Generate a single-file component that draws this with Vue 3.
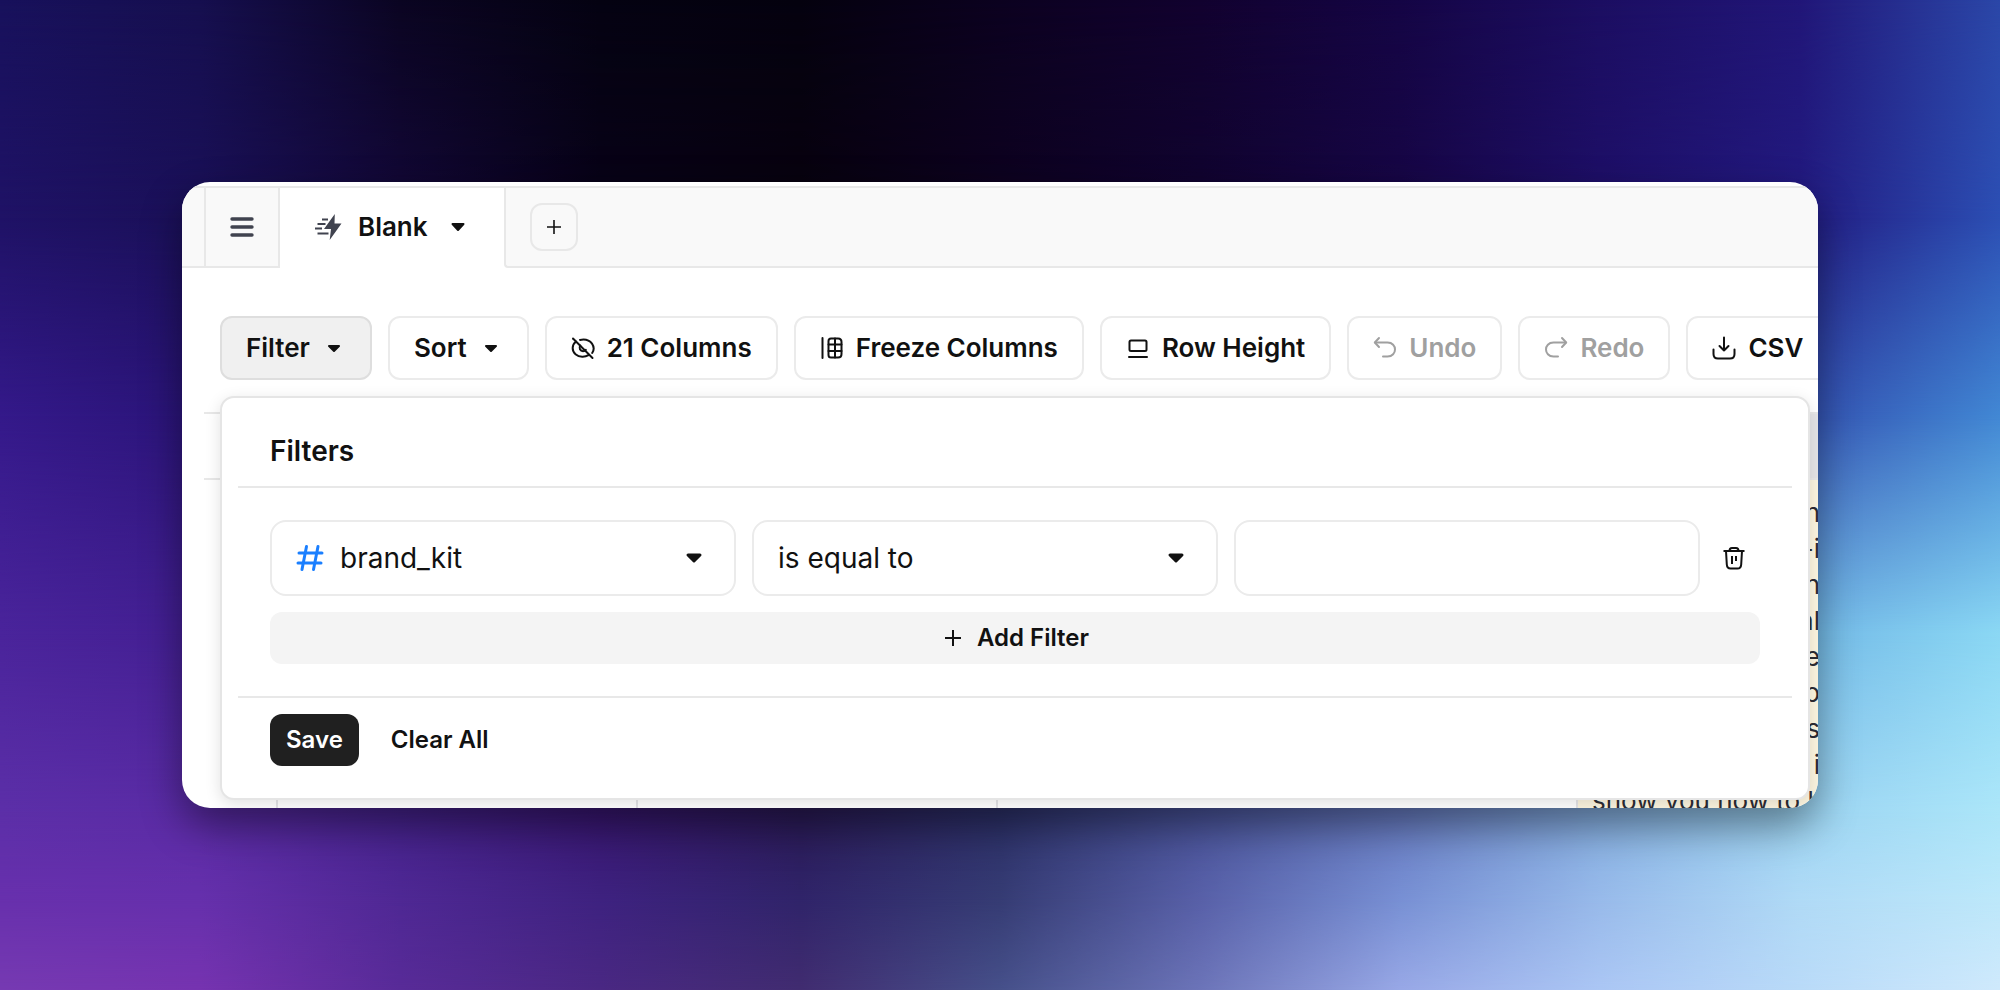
<template>
  <main class="page">
    <div class="backdrop" aria-hidden="true">
      <div
        v-for="(band, index) in bands"
        :key="index"
        class="backdrop__band"
        :style="bandStyle(index)"
      ></div>
    </div>

    <section class="window">
      <nav class="tabs">
        <span class="tabs__edge"></span>
        <button class="tabs__menu" type="button" aria-label="Menu">
          <svg width="28" height="28" viewBox="0 0 28 28">
            <path d="M4 6h20M4 14h20M4 22h20" stroke="#40434f" stroke-width="3.400" stroke-linecap="round" />
          </svg>
        </button>
        <button class="tabs__tab" type="button">
          <svg width="28" height="28" viewBox="0 0 28 28">
            <path d="M20.800 1L10 16h7l-1.300 11L27.500 10.500h-7z" fill="#40434f" />
            <path
              d="M8 6.500h6M3.500 11h8M1 15.500h7M3.500 20.500h11"
              stroke="#40434f"
              stroke-width="2"
            />
          </svg>
          <span>Blank</span>
          <svg class="tabs__caret" width="16" height="16" viewBox="0 0 16 16">
            <path d="M2.500 5h11L8 11z" fill="#111" stroke="#111" stroke-width="2" stroke-linejoin="round" />
          </svg>
        </button>
        <div class="tabs__rest">
          <button class="tabs__add" type="button" aria-label="Add tab">
            <svg width="20" height="20" viewBox="0 0 20 20">
              <path d="M10 3v14M3 10h14" stroke="#111" stroke-width="1.600" />
            </svg>
          </button>
        </div>
      </nav>

      <div class="toolbar">
        <button
          v-for="tool in tools"
          :key="tool.label"
          type="button"
          class="tool"
          :class="{ 'tool--active': tool.menu === 'filters' && showFilters }"
          :disabled="tool.disabled"
          @click="openMenu(tool)"
        >
          <svg v-if="tool.icon" width="24" height="24" viewBox="0 0 24 24" class="tool__icon">
            <path v-for="d in icons[tool.icon]" :key="d" :d="d" />
          </svg>
          <span>{{ tool.label }}</span>
          <svg v-if="tool.menu" width="24" height="24" viewBox="0 0 24 24">
            <path d="M7 10h10l-5 5z" fill="#111" stroke="#111" stroke-width="2" stroke-linejoin="round" />
          </svg>
        </button>

        <form v-if="showFilters" class="popover" @submit.prevent="showFilters = false">
          <h2 class="popover__title">Filters</h2>
          <div class="popover__body">
            <div v-for="(filter, index) in filters" :key="index" class="filter">
              <div class="filter__fields">
                <div class="field">
                  <svg width="28" height="28" viewBox="0 0 28 28">
                    <path
                      d="M10.500 2.500L6 25.500M22 2.500l-4.500 23M3 9h23M2 19h23"
                      fill="none"
                      stroke="#1a7fff"
                      stroke-width="3"
                      stroke-linecap="round"
                    />
                  </svg>
                  <select v-model="filter.column" aria-label="Column">
                    <option>brand_kit</option>
                  </select>
                  <svg class="field__caret" width="32" height="32" viewBox="0 0 32 32">
                    <path d="M10 13h12l-6 6z" fill="#111" stroke="#111" stroke-width="3" stroke-linejoin="round" />
                  </svg>
                </div>
                <div class="field">
                  <select v-model="filter.operator" aria-label="Operator">
                    <option>is equal to</option>
                  </select>
                  <svg class="field__caret" width="32" height="32" viewBox="0 0 32 32">
                    <path d="M10 13h12l-6 6z" fill="#111" stroke="#111" stroke-width="3" stroke-linejoin="round" />
                  </svg>
                </div>
                <div class="field">
                  <input v-model="filter.value" type="text" aria-label="Value" />
                </div>
              </div>
              <button class="filter__remove" type="button" aria-label="Remove filter" @click="removeFilter(index)">
                <svg width="24" height="24" viewBox="0 0 24 24">
                  <path
                    d="M1.500 5h21M7.500 5c0-2 1-3 2.500-3h4c1.500 0 2.500 1 2.500 3M4 5l.8 13.500c.2 3 1.400 4 3.700 4h7c2.300 0 3.500-1 3.700-4L20 5M10 10v8M14 10v5"
                    fill="none"
                    stroke="#111"
                    stroke-width="2"
                  />
                </svg>
              </button>
            </div>
            <button class="button button--wide" type="button" @click="addFilter">
              <svg width="24" height="24" viewBox="0 0 24 24">
                <path d="M12 4v16M4 12h16" stroke="#111" stroke-width="2" />
              </svg>
              <span>Add Filter</span>
            </button>
          </div>
          <div class="popover__footer">
            <button class="button button--dark" type="submit"><span>Save</span></button>
            <button class="button" type="button" @click="filters = []"><span>Clear All</span></button>
          </div>
        </form>
      </div>

      <div class="sheet">
        <table>
          <thead>
            <tr>
              <th class="col-index"></th>
              <th class="col-text"></th>
              <th class="col-text"></th>
              <th class="col-wide"></th>
              <th class="col-last"></th>
            </tr>
          </thead>
          <tbody>
            <tr>
              <td></td>
              <td></td>
              <td></td>
              <td></td>
              <td class="note">
                <p v-for="(line, index) in noteLines" :key="index" class="note__line">{{ line }}</p>
                <p>show you how to b</p>
              </td>
            </tr>
          </tbody>
        </table>
      </div>
    </section>
  </main>
</template>

<script setup>
import { ref } from "vue";

const showFilters = ref(true);
const filters = ref([{ column: "brand_kit", operator: "is equal to", value: "" }]);

const tools = [
  { label: "Filter", menu: "filters" },
  { label: "Sort", menu: "sort" },
  { label: "21 Columns", icon: "hidden" },
  { label: "Freeze Columns", icon: "freeze" },
  { label: "Row Height", icon: "height" },
  { label: "Undo", icon: "undo", disabled: true },
  { label: "Redo", icon: "redo", disabled: true },
  { label: "CSV", icon: "download" },
];

const icons = {
  hidden: [
    "M2 2.500l19.500 19.500",
    "M5 5.500C0.500 9 0.800 15 4.500 18.200c4 3.400 9.500 3.200 13 1",
    "M9 3.900c5-1 9.500.3 12 3.800 2.200 3.200 1.900 6.800.2 9.300",
    "M9.300 9.500c-1.800 2.500 0 5.700 2.700 5.700 1.200 0 2.200-.5 2.800-1.300",
  ],
  freeze: [
    "M2.500 2v20",
    "M11 2.500h7q3.500 0 3.500 3.500v12q0 3.500-3.500 3.500h-7q-2.500 0-2.500-2.500V5q0-2.500 2.500-2.500z",
    "M15 2.500v19",
    "M8.500 8.500h13M8.500 15h13",
  ],
  height: ["M3 21h18", "M5 4.500h14q1.500 0 1.500 1.500v7.500q0 1.500-1.500 1.500H5q-1.500 0-1.500-1.500V6q0-1.500 1.500-1.500z"],
  undo: ["M6 2L1.800 6.500 6 11", "M2.300 6.500h12.200c10 0 10 14 0 14H10"],
  redo: ["M18 2L22.200 6.500 18 11", "M21.700 6.500H9.500c-10 0-10 14 0 14H14"],
  download: ["M12 1.500v13M7.500 10l4.500 4.500 4.500-4.500", "M1.500 13.500v4.500q0 4.500 4.500 4.500h12q4.500 0 4.500-4.500v-4.500"],
};

const noteLines = ["n", "-i", "n", "al", "e", "p", "s", "i"];

// each band is a horizontal gradient that fades into the next one down the page
const bands = [
  { top: 0, colors: ["#18115c", "#160f4f", "#0b0522", "#050312", "#05020f", "#0c0220", "#12022f", "#150545", "#1c0e62", "#211678", "#2b47a8"] },
  { top: 22, colors: ["#1f1266", "#1a1058", "#130838", "#080218", "#08020f", "#0d021f", "#10042f", "#170645", "#1e0f68", "#221a80", "#2c4fb4"] },
  { top: 42, colors: ["#34198a", "#2a1478", "#1c0c48", "#10052c", "#0c0420", "#100828", "#181040", "#202060", "#283c90", "#3350b0", "#4288d4"] },
  { top: 64, colors: ["#4a249b", "#431f92", "#34187a", "#260f58", "#1c0c40", "#1c1a50", "#304080", "#4868a8", "#5a88c8", "#72b8e6", "#8bd8f4"] },
  { top: 82, colors: ["#5c2fa8", "#5a2ba5", "#45228c", "#381670", "#2a1a55", "#2c3068", "#485298", "#667ac0", "#84aee0", "#9cd4f2", "#ace6f9"] },
  { top: 91, colors: ["#6830ad", "#6630ac", "#4f2894", "#3e2280", "#30246a", "#363c74", "#5860a8", "#7890d4", "#98baea", "#b0daf6", "#bde8fa"] },
  { top: 100, colors: ["#763ab2", "#7633b0", "#582b98", "#4a2883", "#412c70", "#46508a", "#6c74b8", "#98a8e6", "#abc6f4", "#b9daf8", "#cfe9fc"] },
];

const bandStyle = (index) => {
  const band = bands[index];
  const style = { background: `linear-gradient(90deg, ${band.colors.join(", ")})` };
  if (index > 0) {
    style.maskImage = `linear-gradient(transparent ${bands[index - 1].top}%, #000 ${band.top}%)`;
  }
  return style;
};

const openMenu = (tool) => {
  if (tool.menu === "filters") {
    showFilters.value = !showFilters.value;
  }
};

const addFilter = () => {
  filters.value.push({ column: "brand_kit", operator: "is equal to", value: "" });
};

const removeFilter = (index) => {
  filters.value.splice(index, 1);
};
</script>

<style>
body {
  margin: 0;
}
</style>

<style scoped>
.page {
  position: relative;
  box-sizing: border-box;
  height: 100vh;
  padding: 182px;
  font-family: Inter, "Liberation Sans", sans-serif;
  font-size: 26px;
  color: #111;
}

.page * {
  box-sizing: border-box;
}

button,
input,
select {
  font: inherit;
  color: inherit;
  background: none;
  border: 0;
  padding: 0;
  margin: 0;
}

button {
  display: flex;
  align-items: center;
  justify-content: center;
  flex-shrink: 0;
  font-weight: 600;
  white-space: nowrap;
  cursor: pointer;
}

button span {
  padding-bottom: 2px;
}

svg {
  flex-shrink: 0;
}

.backdrop,
.backdrop__band {
  position: absolute;
  inset: 0;
}

.window {
  position: relative;
  height: 100%;
  padding-top: 4px;
  overflow: hidden;
  background-color: #fff;
  border-radius: 28px;
  box-shadow: 0 18px 40px rgba(0, 0, 0, 0.42);
}

.tabs {
  display: flex;
  height: 82px;
  border-top: 2px solid #e8e8e8;
}

.tabs__edge,
.tabs__menu,
.tabs__rest {
  background-color: #f9f9f9;
  border-bottom: 2px solid #e8e8e8;
}

.tabs__edge {
  width: 24px;
  border-right: 2px solid #e8e8e8;
}

.tabs__menu {
  width: 74px;
  border-right: 2px solid #e8e8e8;
}

.tabs__tab {
  gap: 16px;
  padding: 0 38px 2px 34px;
}

.tabs__caret {
  margin-left: 6px;
}

.tabs__rest {
  flex: 1;
  display: flex;
  align-items: center;
  padding-left: 24px;
  border-left: 2px solid #e8e8e8;
  border-bottom-left-radius: 4px;
}

.tabs__add {
  width: 48px;
  height: 48px;
  border: 2px solid #e8e8e8;
  border-radius: 12px;
}

.toolbar {
  position: relative;
  display: flex;
  gap: 16px;
  padding: 48px 0 0 38px;
}

.tool {
  gap: 12px;
  height: 64px;
  padding: 0 24px;
  border: 2px solid #ebebeb;
  border-radius: 12px;
}

.tool--active {
  background-color: #f0f0f0;
  border-color: #dedede;
}

.tool:disabled {
  color: #a0a0a0;
  cursor: default;
}

.tool__icon {
  fill: none;
  stroke: currentColor;
  stroke-width: 2;
  stroke-linecap: round;
  stroke-linejoin: round;
}

.popover {
  position: absolute;
  z-index: 1;
  top: calc(100% + 16px);
  left: 38px;
  right: 8px;
  padding: 0 16px;
  background-color: #fff;
  border: 2px solid #e5e5e5;
  border-radius: 14px;
  box-shadow: 0 4px 16px rgba(0, 0, 0, 0.12);
}

.popover__title {
  margin: 0;
  padding: 35px 32px 17px;
  border-bottom: 2px solid #e8e8e8;
  font-size: 28px;
  font-weight: 600;
  line-height: 36px;
}

.popover__body {
  display: flex;
  flex-direction: column;
  gap: 16px;
  padding: 32px;
}

.filter {
  display: flex;
  gap: 8px;
}

.filter__fields {
  flex: 1;
  display: grid;
  grid-template-columns: repeat(3, minmax(0, 1fr));
  gap: 16px;
}

.field {
  display: flex;
  align-items: center;
  gap: 16px;
  height: 76px;
  padding: 0 24px;
  border: 2px solid #ebebeb;
  border-radius: 16px;
  font-size: 28px;
}

.field select,
.field input {
  flex: 1;
  min-width: 0;
  height: 100%;
  appearance: none;
  outline: none;
}

.field__caret {
  pointer-events: none;
}

.filter__remove {
  width: 52px;
}

.popover__footer {
  display: flex;
  gap: 16px;
  padding: 16px 32px 32px;
  border-top: 2px solid #e8e8e8;
}

.button {
  gap: 12px;
  height: 52px;
  padding: 0 16px;
  border-radius: 12px;
  font-size: 24px;
}

.button--wide {
  background-color: #f4f4f4;
}

.button--dark {
  background-color: #202020;
  color: #fff;
}

.sheet {
  margin: 32px -2px 0 22px;
}

table {
  width: 100%;
  table-layout: fixed;
  border-collapse: separate;
  border-spacing: 0;
}

th {
  height: 68px;
  padding: 0;
  border-top: 2px solid #e8e8e8;
  border-bottom: 2px solid #e8e8e8;
}

td {
  padding: 0;
  border-right: 2px solid #e4e4e7;
}

.col-index {
  width: 74px;
}

.col-text {
  width: 360px;
}

.col-wide {
  width: 580px;
}

.col-last {
  background-color: #e4e4e7;
}

.note {
  padding: 15px 0 0 14px;
  border-right: 0;
  background-color: #fcf5df;
  color: #2b2b33;
  line-height: 36px;
  white-space: nowrap;
}

.note p {
  margin: 0;
}

.note .note__line {
  text-align: right;
}
</style>
